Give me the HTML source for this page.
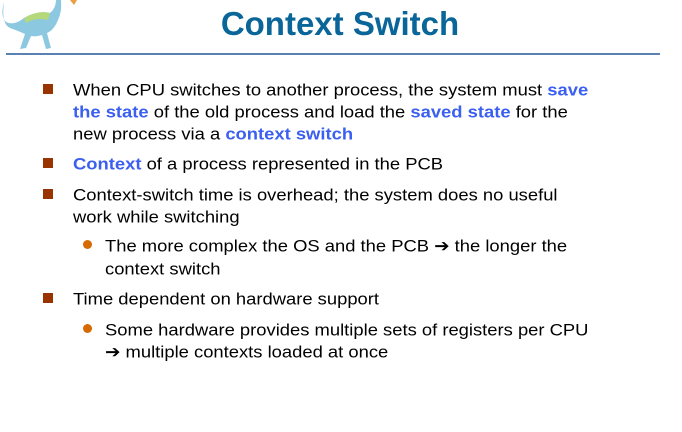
<!DOCTYPE html>
<html><head><meta charset="utf-8"><style>
body{margin:0;width:682px;height:432px;background:#fff;position:relative;overflow:hidden;font-family:"Liberation Sans",sans-serif;}
.t{position:absolute;left:0;width:680px;text-align:center;top:5px;font-size:33px;font-weight:bold;color:#0a6699;}
.hr{position:absolute;left:6px;width:654px;top:53px;height:2px;background:#5b80b2;}
.l{position:absolute;font-size:18.4px;color:#000;white-space:nowrap;line-height:22px;transform:scaleY(0.92);transform-origin:0 50%;}
.b{color:#3b5ff0;font-weight:bold;}
.sq{position:absolute;width:10px;height:10px;background:#993300;}
.dot{position:absolute;width:9px;height:9px;border-radius:50%;background:#d66a00;}
</style></head><body>
<svg style="position:absolute;left:0;top:0" width="80" height="54" viewBox="0 0 80 54">
<path d="M4 2 Q0 16 6 22 Q14 26 24 18 Q38 10 50 13 Q56 8 56 0 L61 0 Q62 12 58 20 Q54 30 47 33 L51 48 L46 49 L42 35 Q36 37 31 36 L26 48 L20 49 L25 34 Q16 30 10 28 Q1 24 4 2Z" fill="#8cc8e0"/>
<path d="M24 18 Q38 10 50 13 L48 20 Q36 17 26 23Z" fill="#b4d87a"/>
<path d="M70 0 L77 0 L74 5Z" fill="#e8a040"/>
</svg>
<div class="t">Context Switch</div>
<div class="hr"></div>
<div class="sq" style="left:43px;top:84px"></div>
<div class="l" style="left:73px;top:79px">When CPU switches to another process, the system must <span class="b">save</span></div>
<div class="l" style="left:73px;top:101px"><span class="b">the state</span> of the old process and load the <span class="b">saved state</span> for the</div>
<div class="l" style="left:73px;top:123px">new process via a <span class="b">context switch</span></div>
<div class="sq" style="left:43px;top:158px"></div>
<div class="l" style="left:73px;top:153px"><span class="b">Context</span> of a process represented in the PCB</div>
<div class="sq" style="left:43px;top:189px"></div>
<div class="l" style="left:73px;top:184px">Context-switch time is overhead; the system does no useful</div>
<div class="l" style="left:73px;top:206px">work while switching</div>
<div class="dot" style="left:83px;top:240px"></div>
<div class="l" style="left:105px;top:235px">The more complex the OS and the PCB ➔ the longer the</div>
<div class="l" style="left:105px;top:258px">context switch</div>
<div class="sq" style="left:43px;top:293px"></div>
<div class="l" style="left:73px;top:288px">Time dependent on hardware support</div>
<div class="dot" style="left:83px;top:324px"></div>
<div class="l" style="left:105px;top:319px">Some hardware provides multiple sets of registers per CPU</div>
<div class="l" style="left:105px;top:341px">➔ multiple contexts loaded at once</div>
</body></html>
